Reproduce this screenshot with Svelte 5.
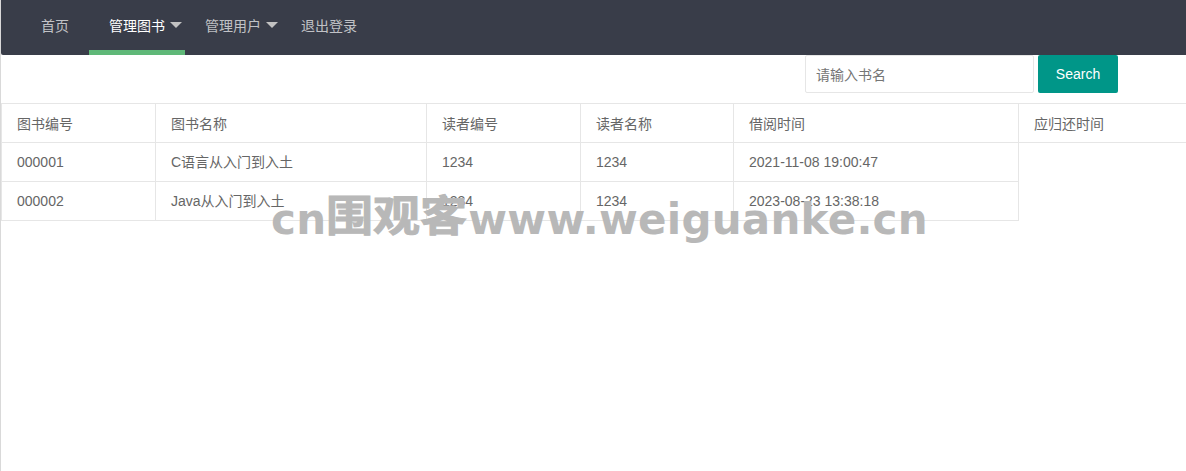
<script>
	const columns = ['图书编号', '图书名称', '读者编号', '读者名称', '借阅时间', '应归还时间'];
	const widths = [154, 271, 154, 153, 285, 260];
	const rows = [
		['000001', 'C语言从入门到入土', '1234', '1234', '2021-11-08 19:00:47'],
		['000002', 'Java从入门到入土', '1234', '1234', '2023-08-23 13:38:18']
	];
	const menu = [
		{ label: '首页' },
		{ label: '管理图书', more: true, active: true },
		{ label: '管理用户', more: true },
		{ label: '退出登录' }
	];
</script>

<div class="page">
	<ul class="nav">
		{#each menu as item}
			<li class:active={item.active} class:more={item.more}>
				<a href="#top">{item.label}</a>
			</li>
		{/each}
	</ul>

	<form class="search" onsubmit={(e) => e.preventDefault()}>
		<input type="text" placeholder="请输入书名" />
		<button type="submit">Search</button>
	</form>

	<table>
		<colgroup>
			{#each widths as w}
				<col style="width: {w}px" />
			{/each}
		</colgroup>
		<thead>
			<tr>
				{#each columns as c}
					<th>{c}</th>
				{/each}
			</tr>
		</thead>
		<tbody>
			{#each rows as row}
				<tr>
					{#each row as cell}
						<td>{cell}</td>
					{/each}
				</tr>
			{/each}
		</tbody>
	</table>

	<div class="watermark">cn<span class="cjk"><span>围观客</span></span>www.weiguanke.cn</div>
</div>

<style>
	:global(body) {
		margin: 0;
		background: #fff;
	}

	.page {
		position: relative;
		width: 1186px;
		height: 471px;
		box-sizing: border-box;
		border-left: 1px solid #d9d9d9;
		overflow: hidden;
		font-family: 'Liberation Sans', 'Noto Sans CJK SC', sans-serif;
		font-size: 14px;
		color: #666;
	}

	.nav {
		display: flex;
		height: 55px;
		margin: 0;
		padding: 0 20px;
		list-style: none;
		background: #393d49;
		border-radius: 0 0 0 2px;
	}

	.nav li {
		position: relative;
		height: 55px;
		line-height: 52px;
	}

	.nav a {
		display: block;
		padding: 0 20px;
		color: rgba(255, 255, 255, 0.7);
		text-decoration: none;
	}

	.nav .active a {
		color: #fff;
	}

	.nav .active::after {
		content: '';
		position: absolute;
		left: 0;
		right: 0;
		bottom: 0;
		height: 5px;
		background: #5fb878;
	}

	.nav .more::before {
		content: '';
		position: absolute;
		top: 22px;
		right: 3px;
		border-style: solid;
		border-width: 6px 6px 0;
		border-color: #c2c2c2 transparent transparent;
	}

	.search {
		display: flex;
		justify-content: flex-end;
		gap: 4px;
		padding-right: 68px;
	}

	.search input {
		box-sizing: border-box;
		width: 229px;
		height: 38px;
		padding: 1px 10px 0;
		border: 1px solid #e6e6e6;
		border-radius: 2px;
		outline: none;
		font: inherit;
		color: #666;
	}

	.search input::placeholder {
		color: #757575;
	}

	.search button {
		width: 80px;
		height: 38px;
		padding: 0;
		border: 0;
		border-radius: 2px;
		background: #009688;
		color: #fff;
		font: inherit;
	}

	table {
		table-layout: fixed;
		width: 1277px;
		margin-top: 10px;
		border-collapse: collapse;
	}

	th,
	td {
		box-sizing: border-box;
		height: 39px;
		padding: 0 15px;
		border: 1px solid #e6e6e6;
		font-weight: 400;
		text-align: left;
		line-height: 20px;
	}

	th {
		padding-top: 2px;
	}

	.watermark {
		position: absolute;
		left: 270px;
		top: 192px;
		font-family: 'DejaVu Sans', 'Noto Sans CJK SC', sans-serif;
		font-size: 42px;
		font-weight: 700;
		line-height: 56px;
		letter-spacing: 0.25px;
		color: #b8b8b8;
		white-space: nowrap;
	}

	.watermark .cjk {
		display: inline-block;
		width: 142px;
		line-height: 0;
	}

	.watermark .cjk span {
		display: inline-block;
		font-size: 42px;
		letter-spacing: 0;
		-webkit-text-stroke: 1px #b8b8b8;
		transform: translateY(-3px) scaleX(1.12);
		transform-origin: left center;
	}
</style>
